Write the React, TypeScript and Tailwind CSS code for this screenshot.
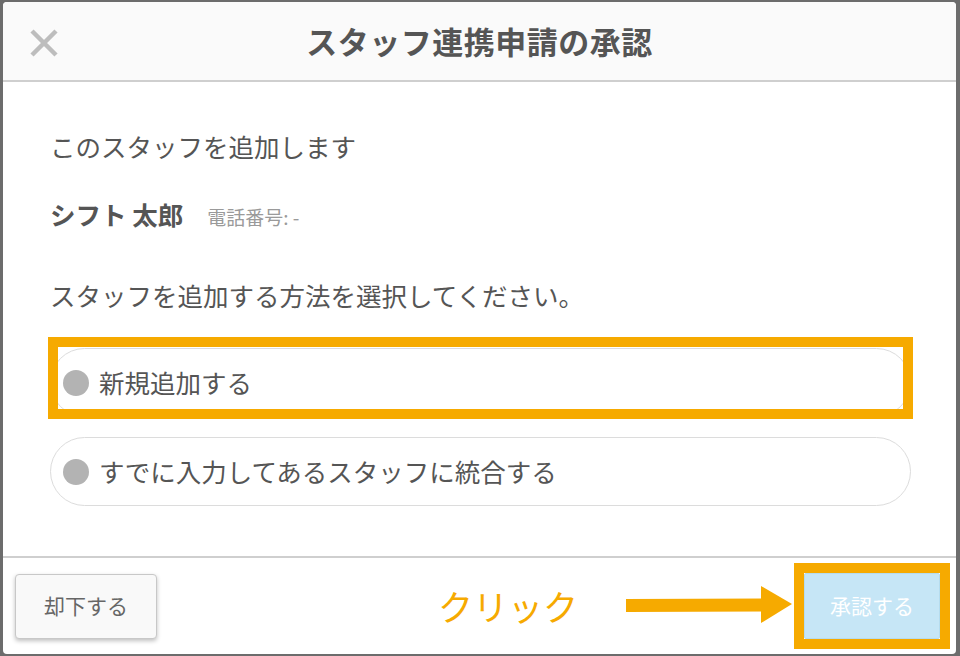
import React from "react";

const font = { fontFamily: '"Noto Sans CJK JP", "Noto Sans", sans-serif' };

function Radio({ label }: { label: string }) {
  return (
    <div className="flex h-[69px] items-center rounded-full border border-[#dcdcdc] bg-white pl-[12px]">
      <span className="h-[26px] w-[26px] shrink-0 rounded-full bg-[#b3b3b3]" />
      <span className="ml-[10px] whitespace-nowrap text-[25.5px] text-[#555]">{label}</span>
    </div>
  );
}

export default function App() {
  return (
    <div
      className="relative h-[656px] w-[960px] overflow-hidden bg-[#6c6c6c] pl-[3px] pt-[2px]"
      style={font}
    >
      <div className="flex h-[652px] w-[953px] flex-col overflow-hidden rounded-[4px] bg-white">
        {/* header */}
        <div className="relative flex h-[80px] shrink-0 items-center justify-center border-b-2 border-[#cfcfcf] bg-[#fafafa]">
          <svg
            className="absolute left-[26px] top-[26px]"
            width="30"
            height="30"
            viewBox="0 0 30 30"
          >
            <path d="M3 3 L27 27 M27 3 L3 27" stroke="#bdbdbd" strokeWidth="4.5" />
          </svg>
          <h1 className="text-[31px] font-bold tracking-[0.5px] text-[#555]">
            スタッフ連携申請の承認
          </h1>
        </div>

        {/* body */}
        <div className="flex flex-1 flex-col pl-[47px] pr-[45px] pt-[46px]">
          <p className="whitespace-nowrap text-[25.5px] leading-[36px] text-[#555]">このスタッフを追加します</p>
          <div className="mt-[32px] flex items-baseline">
            <span className="whitespace-nowrap text-[25.5px] font-bold leading-[36px] text-[#555]">シフト 太郎</span>
            <span className="ml-[24px] whitespace-nowrap text-[19px] text-[#9a9a9a]">電話番号: -</span>
          </div>
          <p className="mt-[45px] whitespace-nowrap text-[25.5px] leading-[36px] text-[#555]">
            スタッフを追加する方法を選択してください。
          </p>
          <div className="relative mt-[35px]">
            <Radio label="新規追加する" />
            <div className="pointer-events-none absolute left-[-2px] right-[-2px] top-[-11px] h-[82px] border-[10px] border-[#f6aa00]" />
          </div>
          <div className="mt-[20px]">
            <Radio label="すでに入力してあるスタッフに統合する" />
          </div>
        </div>

        {/* footer */}
        <div className="flex h-[98px] shrink-0 items-center border-t-2 border-[#cfcfcf] pl-[12px] pr-[6px]">
          <button className="h-[65px] w-[142px] shrink-0 rounded-[4px] border border-[#c8c8c8] bg-[#f9f9f9] text-[21px] text-[#666] shadow-[0_2px_4px_rgba(0,0,0,0.25)]">
            却下する
          </button>
          <span className="ml-[281px] shrink-0 whitespace-nowrap text-[35px] font-normal leading-[40px] text-[#f6aa00]">
            クリック
          </span>
          <svg className="ml-[48px] shrink-0" width="166" height="40" viewBox="0 0 166 40">
            <path d="M0 13 L137 12.5 L137 25.5 L0 26 Z" fill="#f6aa00" />
            <path d="M135 0 L166 18 L135 37 Z" fill="#f6aa00" />
          </svg>
          <div className="ml-auto shrink-0 border-[10px] border-[#f6aa00]">
            <button className="block h-[66px] w-[136px] rounded-[2px] border border-[#b5dcef] bg-[#c6e6f6] text-[21px] text-white">
              承認する
            </button>
          </div>
        </div>
      </div>
    </div>
  );
}
